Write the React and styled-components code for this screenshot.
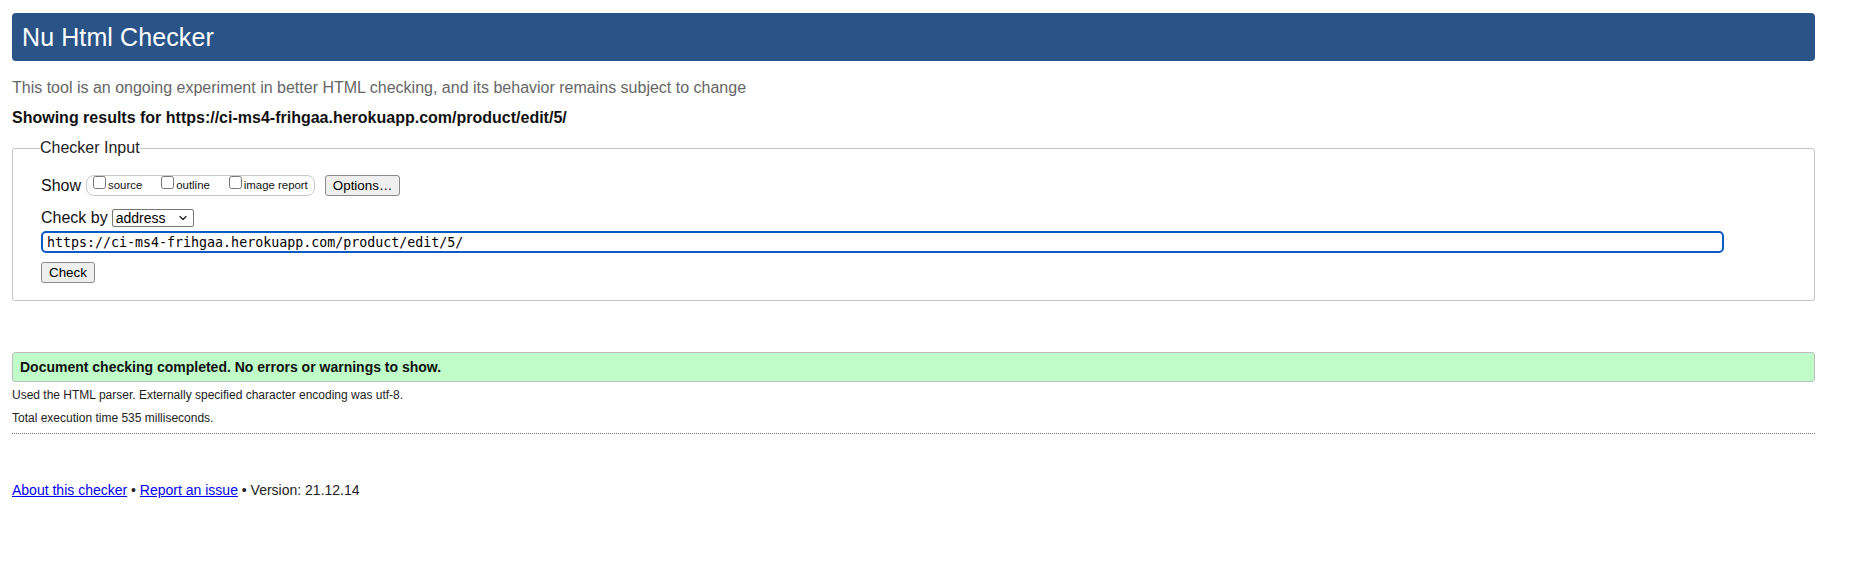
import { createGlobalStyle, styled } from "styled-components";
import { ChevronDown } from "lucide-react";

const Global = createGlobalStyle`
  body {
    margin: 0;
    background: #fff;
    font-family: "Liberation Sans", Arial, Helvetica, sans-serif;
    color: #111;
  }
`

const Page = styled.div`
  padding: 13px 43px 40px 12px;
`
const Header = styled.header`
  height: 48px;
  background-color: #2a5488;
  border-radius: 4px;
  display: flex;
  align-items: center;
  padding-left: 10px;
`
const Title = styled.h1`
  margin: 0;
  color: #fff;
  font-size: 25px;
  font-weight: normal;
  letter-spacing: 0.1px;
`
const Intro = styled.p`
  margin: 17px 0 0;
  font-size: 16px;
  line-height: 20px;
  color: #666;
`
const Results = styled.p`
  margin: 10px 0 0;
  font-size: 16px;
  line-height: 20px;
  font-weight: bold;
`
const Fieldset = styled.fieldset`
  margin: 10px 0 0;
  padding: 17px 20px 17px 28px;
  border: 1px solid #c6c6c6;
  border-radius: 3px;
  min-width: 0;
`
const Legend = styled.legend`
  font-size: 16px;
  line-height: 20px;
  padding: 0;
  margin-left: -1px;
  color: #222;
`
const Row = styled.div`
  display: flex;
  align-items: center;
  font-size: 16px;
  margin-top: ${p => p.$gap || 0}px;
`
const Label = styled.span`
  margin-right: ${p => p.$space || 5}px;
`
const Group = styled.span`
  display: inline-block;
  height: 19px;
  line-height: 19px;
  border: 1px solid #c8c8c8;
  border-radius: 8px;
  padding: 0 6px 0 6px;
  font-size: 11.4px;
  white-space: nowrap;
`
const Option = styled.label`
  margin-left: ${p => (p.$first ? 0 : 19)}px;
`
const Box = styled.input`
  width: 13px;
  height: 13px;
  margin: 0 2px 0 0;
  vertical-align: baseline;
`
const Button = styled.button`
  height: ${p => p.$h || 21}px;
  padding: 0 ${p => p.$pad || 7}px;
  margin-left: ${p => p.$left || 0}px;
  font-family: "Liberation Sans", Arial, sans-serif;
  font-size: 13.4px;
  color: #000;
  background: #efefef;
  border: 1px solid #8a8a8a;
  border-radius: 3px;
`
const SelectWrap = styled.span`
  position: relative;
  display: inline-flex;
`
const Select = styled.select`
  appearance: none;
  width: 82px;
  height: 18px;
  padding: 0 0 0 3px;
  font-family: "Liberation Sans", Arial, sans-serif;
  font-size: 14px;
  color: #000;
  background: #fff;
  border: 1px solid #767676;
  border-radius: 2px;
`
const Chevron = styled(ChevronDown)`
  position: absolute;
  right: 5px;
  top: 3px;
  pointer-events: none;
`
const UrlInput = styled.input`
  display: block;
  box-sizing: border-box;
  width: 1683px;
  height: 22px;
  margin-top: 4px;
  padding: 0 4px;
  border: 2px solid #0a5cc4;
  border-radius: 5px;
  outline: none;
  font-family: "DejaVu Sans Mono", monospace;
  font-size: 13.3px;
  color: #000;
`
const Success = styled.p`
  margin: 51px 0 0;
  padding: 6px 7px 5px;
  line-height: 17px;
  font-size: 14px;
  font-weight: bold;
  background: #bffcc8;
  border: 1px solid #bdbdbd;
  border-radius: 3px;
`
const Meta = styled.p`
  margin: ${p => p.$top}px 0 0;
  font-size: 12px;
  line-height: 15px;
  color: #222;
`
const Rule = styled.hr`
  margin: 7px 0 0;
  border: 0;
  border-top: 1px dotted #777;
`
const Footer = styled.p`
  margin: 48px 0 0;
  font-size: 14px;
  line-height: 17px;
  color: #222;
  a { color: #0000ee; }
`

export default function App() {
  return (
    <Page>
      <Global />
      <Header>
        <Title>Nu Html Checker</Title>
      </Header>
      <Intro>This tool is an ongoing experiment in better HTML checking, and its behavior remains subject to change</Intro>
      <Results>Showing results for https://ci-ms4-frihgaa.herokuapp.com/product/edit/5/</Results>

      <Fieldset>
        <Legend>Checker Input</Legend>
        <Row>
          <Label>Show</Label>
          <Group>
            <Option $first><Box type="checkbox" />source</Option>
            <Option><Box type="checkbox" />outline</Option>
            <Option><Box type="checkbox" />image report</Option>
          </Group>
          <Button $left={10}>Options…</Button>
        </Row>
        <Row $gap={13}>
          <Label $space={4}>Check by</Label>
          <SelectWrap>
            <Select defaultValue="address">
              <option value="address">address</option>
              <option value="file">file upload</option>
              <option value="text">text input</option>
            </Select>
            <Chevron size={12} strokeWidth={2.5} color="#222" />
          </SelectWrap>
        </Row>
        <UrlInput type="url" defaultValue="https://ci-ms4-frihgaa.herokuapp.com/product/edit/5/" />
        <Row $gap={9}>
          <Button $h={21} $pad={7}>Check</Button>
        </Row>
      </Fieldset>

      <Success>Document checking completed. No errors or warnings to show.</Success>
      <Meta $top={6}>Used the HTML parser. Externally specified character encoding was utf-8.</Meta>
      <Meta $top={8}>Total execution time 535 milliseconds.</Meta>
      <Rule />
      <Footer>
        <a href="#about">About this checker</a> • <a href="#issue">Report an issue</a> • Version: 21.12.14
      </Footer>
    </Page>
  );
}
